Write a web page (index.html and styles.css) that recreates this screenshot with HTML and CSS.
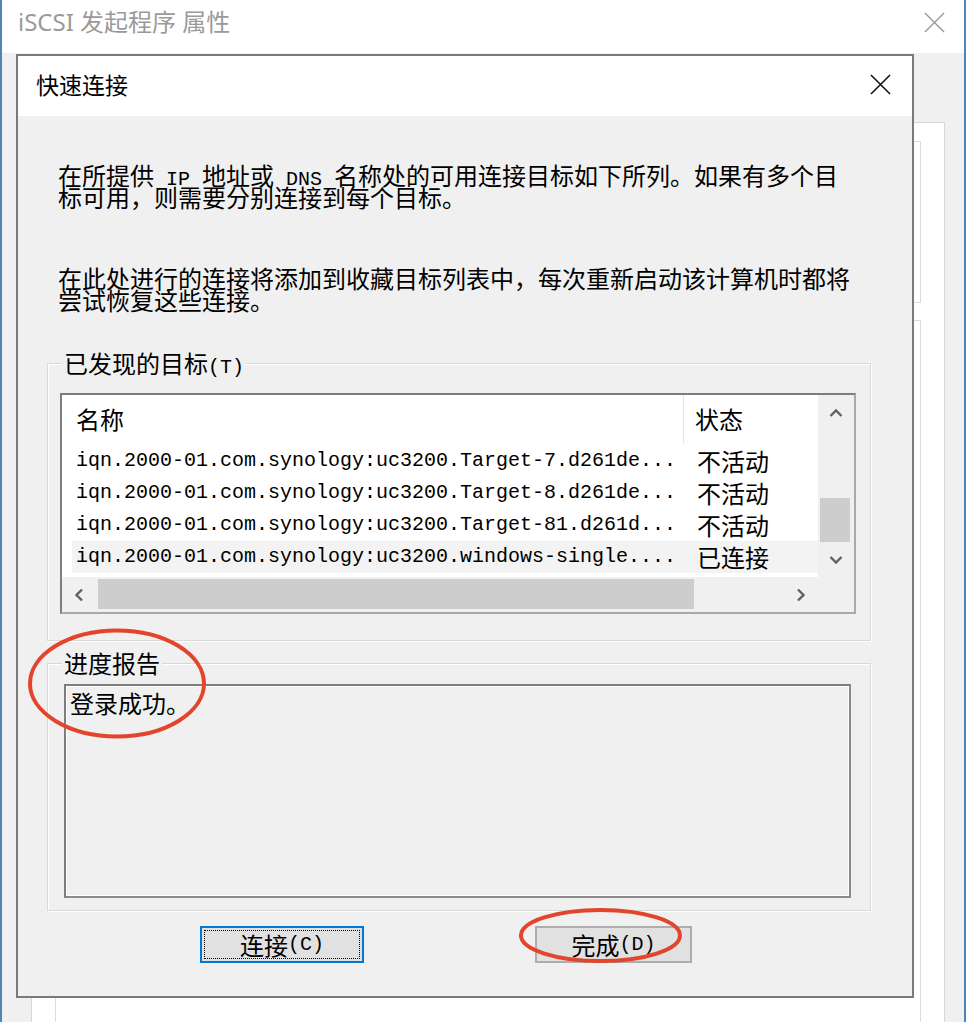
FILE: index.html
```html
<!DOCTYPE html>
<html lang="zh-CN">
<head>
<meta charset="utf-8">
<title>快速连接</title>
<link rel="stylesheet" href="styles.css">
</head>
<body>
<div class="window">
  <div class="titlebar">
    <span class="title">iSCSI 发起程序 属性</span>
    <svg class="close-x outer-x" viewBox="0 0 22 22"><path d="M1 1L21 21M21 1L1 21"/></svg>
  </div>
  <div class="window-body">
    <div class="tab-panel">
      <div class="bg-group bg-group-top"></div>
      <div class="bg-group bg-group-bottom"></div>
    </div>
  </div>

  <div class="dialog">
    <div class="dlg-titlebar">
      <span class="dlg-title">快速连接</span>
      <svg class="close-x dlg-x" viewBox="0 0 22 22"><path d="M1 1L21 21M21 1L1 21"/></svg>
    </div>
    <div class="dlg-body">
      <p class="intro">在所提供<span class="mono"> IP </span>地址或<span class="mono"> DNS </span>名称处的可用连接目标如下所列。如果有多个目标可用，则需要分别连接到每个目标。</p>
      <p class="intro intro-2">在此处进行的连接将添加到收藏目标列表中，每次重新启动该计算机时都将尝试恢复这些连接。</p>

      <div class="groupbox gb-found">
        <div class="gb-label">已发现的目标<span class="mono">(T)</span></div>
        <div class="listview">
          <div class="lv-content">
            <div class="lv-header">
              <div class="lv-hcell lv-hname">名称</div>
              <div class="lv-hcell lv-hstatus">状态</div>
            </div>
            <div class="lv-row">
              <div class="lv-name">iqn.2000-01.com.synology:uc3200.Target-7.d261de...</div>
              <div class="lv-status">不活动</div>
            </div>
            <div class="lv-row">
              <div class="lv-name">iqn.2000-01.com.synology:uc3200.Target-8.d261de...</div>
              <div class="lv-status">不活动</div>
            </div>
            <div class="lv-row">
              <div class="lv-name">iqn.2000-01.com.synology:uc3200.Target-81.d261d...</div>
              <div class="lv-status">不活动</div>
            </div>
            <div class="lv-row lv-row-hot">
              <div class="lv-name">iqn.2000-01.com.synology:uc3200.windows-single....</div>
              <div class="lv-status">已连接</div>
            </div>
          </div>
          <div class="vscroll">
            <div class="sb-btn sb-up"><svg viewBox="0 0 14 10"><path d="M1.5 8L7 2.5L12.5 8"/></svg></div>
            <div class="sb-track-v"><div class="sb-thumb-v"></div></div>
            <div class="sb-btn sb-down"><svg viewBox="0 0 14 10"><path d="M1.5 2L7 7.5L12.5 2"/></svg></div>
          </div>
          <div class="hscroll">
            <div class="sb-btn sb-left"><svg viewBox="0 0 10 14"><path d="M8 1.5L2.5 7L8 12.5"/></svg></div>
            <div class="sb-track-h"><div class="sb-thumb-h"></div></div>
            <div class="sb-btn sb-right"><svg viewBox="0 0 10 14"><path d="M2 1.5L7.5 7L2 12.5"/></svg></div>
          </div>
          <div class="sb-corner"></div>
        </div>
      </div>

      <div class="groupbox gb-progress">
        <div class="gb-label">进度报告</div>
        <div class="report">登录成功。</div>
      </div>

      <div class="buttons">
        <button class="btn btn-focus"><span class="btn-inner">连接<span class="mono">(C)</span></span></button>
        <button class="btn btn-done">完成<span class="mono">(D)</span></button>
      </div>
    </div>
  </div>

  <svg class="annotations" viewBox="0 0 966 1022">
    <ellipse cx="117" cy="683.5" rx="87" ry="53"/>
    <ellipse cx="600.5" cy="935.5" rx="79.5" ry="25.5"/>
  </svg>
</div>
</body>
</html>
```

FILE: styles.css
```css
* { box-sizing: border-box; }
html, body { margin: 0; padding: 0; }
body {
  width: 966px;
  height: 1022px;
  overflow: hidden;
  background: #fff;
  color: #000;
  font-family: "Noto Sans CJK SC", sans-serif;
}

.mono {
  font-family: "Liberation Mono", "DejaVu Sans Mono", monospace;
  font-size: 20px;
  line-height: 0;
  white-space: pre;
}

/* ---------- outer window ---------- */
.window {
  position: relative;
  width: 966px;
  height: 1022px;
  border-left: 2px solid #4a86b8;
  border-right: 2px solid #4a86b8;
  display: flex;
  flex-direction: column;
}
.titlebar {
  height: 53px;
  flex: none;
  background: #fff;
  display: flex;
  align-items: center;
  padding: 0 19px 9px 16px;
}
.title {
  font-family: "Noto Sans", "Noto Sans CJK SC", sans-serif;
  font-size: 24px;
  line-height: 30px;
  color: #9a9a9a;
}
.close-x {
  fill: none;
  width: 21px;
  height: 21px;
}
.outer-x {
  margin-left: auto;
  stroke: #9a9a9a;
  stroke-width: 1.5;
}
.window-body {
  flex: 1;
  min-height: 0;
  background: #f0f0f0;
  padding: 69px 0 0 29px;
  display: flex;
}
.tab-panel {
  width: 914px;
  background: #fff;
  border: 1px solid #d9d9d9;
  border-bottom: none;
  padding: 18px 23px 0 23px;
  overflow: hidden;
}
.bg-group {
  border: 1px solid #dcdcdc;
}
.bg-group-top { height: 162px; }
.bg-group-bottom { margin-top: 17px; height: 800px; }

/* ---------- dialog ---------- */
.dialog {
  position: absolute;
  left: 14px;
  top: 54px;
  width: 898px;
  height: 944px;
  border: 2px solid #7a7a7a;
  display: flex;
  flex-direction: column;
}
.dlg-titlebar {
  height: 60px;
  flex: none;
  background: #fff;
  display: flex;
  align-items: center;
  padding: 0 21px 4px 18px;
}
.dlg-title {
  font-size: 23px;
  line-height: 30px;
}
.dlg-x {
  margin-left: auto;
  stroke: #111;
  stroke-width: 1.6;
}
.dlg-body {
  flex: 1;
  background: #f0f0f0;
  padding: 0 0 0 29px;
}
.intro {
  margin: 48px 0 0 11px;
  width: 800px;
  font-size: 24px;
  line-height: 22px;
}
.intro-2 { margin-top: 59px; }

.groupbox {
  width: 824px;
  border: 1px solid #d8d8d8;
  box-shadow: inset 1px 1px 0 #fff, 1px 1px 0 #fff;
}
.gb-label {
  display: block;
  width: fit-content;
  margin: -13px 0 0 14px;
  padding: 0 2px;
  background: #f0f0f0;
  font-size: 24px;
  line-height: 24px;
}
.gb-found {
  margin-top: 52px;
  height: 278px;
}
.gb-progress {
  margin-top: 22px;
  height: 248px;
}

/* ---------- list view ---------- */
.listview {
  margin: 18px 0 0 12px;
  width: 796px;
  height: 221px;
  border: 2px solid;
  border-color: #7d7d7d #a9a9a9 #a9a9a9 #7d7d7d;
  background: #fff;
  display: grid;
  grid-template-columns: 756px 36px;
  grid-template-rows: 182px 35px;
}
.lv-content { overflow: hidden; }
.lv-header {
  height: 50px;
  display: flex;
  font-size: 24px;
}
.lv-hcell {
  height: 48px;
  line-height: 48px;
}
.lv-hname {
  width: 622px;
  padding-left: 14px;
  border-right: 1px solid #e5e5e5;
}
.lv-hstatus { padding-left: 11px; }
.lv-row {
  margin-left: 10px;
  height: 32px;
  display: flex;
  align-items: center;
}
.lv-row-hot { background: #f3f3f3; }
.lv-name {
  width: 612px;
  padding-left: 4px;
  font-family: "Liberation Mono", "DejaVu Sans Mono", monospace;
  font-size: 20px;
  line-height: 32px;
  white-space: pre;
}
.lv-status {
  padding-left: 13px;
  font-size: 24px;
  line-height: 32px;
}

.vscroll {
  background: #f0f0f0;
  display: flex;
  flex-direction: column;
}
.sb-btn {
  display: flex;
  align-items: center;
  justify-content: center;
}
.sb-btn svg {
  fill: none;
  stroke: #606060;
  stroke-width: 2.4;
}
.sb-up { height: 36px; }
.sb-down { height: 34px; }
.sb-up svg, .sb-down svg { width: 14px; height: 10px; }
.sb-track-v { flex: 1; padding: 67px 4px 0 2px; }
.sb-thumb-v { height: 44px; background: #cdcdcd; }

.hscroll {
  background: #f0f0f0;
  display: flex;
}
.sb-left, .sb-right { width: 34px; }
.sb-left svg, .sb-right svg { width: 10px; height: 14px; }
.sb-track-h { flex: 1; padding: 2px 0 3px 2px; }
.sb-thumb-h { width: 596px; height: 100%; background: #cdcdcd; }
.sb-corner { background: #f0f0f0; }

/* ---------- report box ---------- */
.report {
  margin: 9px 0 0 16px;
  width: 787px;
  height: 214px;
  border: 2px solid;
  border-color: #7d7d7d #8a8a8a #8a8a8a #7d7d7d;
  box-shadow: inset 1px 1px 0 #fff, inset -1px -1px 0 #fff;
  padding: 5px 0 0 4px;
  font-size: 24px;
  line-height: 24px;
}

/* ---------- buttons ---------- */
.buttons {
  margin-top: 15px;
  display: flex;
  padding-left: 153px;
  gap: 171px;
}
.btn {
  height: 37px;
  padding: 0;
  background: #e1e1e1;
  border: 2px solid #adadad;
  font-family: "Noto Sans CJK SC", sans-serif;
  font-size: 24px;
  line-height: 1;
  color: #000;
  display: flex;
  align-items: center;
  justify-content: center;
}
.btn-focus {
  width: 164px;
  border-color: #0078d7;
  padding: 2px;
}
.btn-inner {
  width: 100%;
  height: 100%;
  display: flex;
  align-items: center;
  justify-content: center;
  outline: 1px dotted #000;
  outline-offset: -1px;
}
.btn-done { width: 157px; }

/* ---------- red annotation marks ---------- */
.annotations {
  position: absolute;
  left: -2px;
  top: 0;
  width: 966px;
  height: 1022px;
  pointer-events: none;
  fill: none;
  stroke: #e2442c;
  stroke-width: 4;
}
```
